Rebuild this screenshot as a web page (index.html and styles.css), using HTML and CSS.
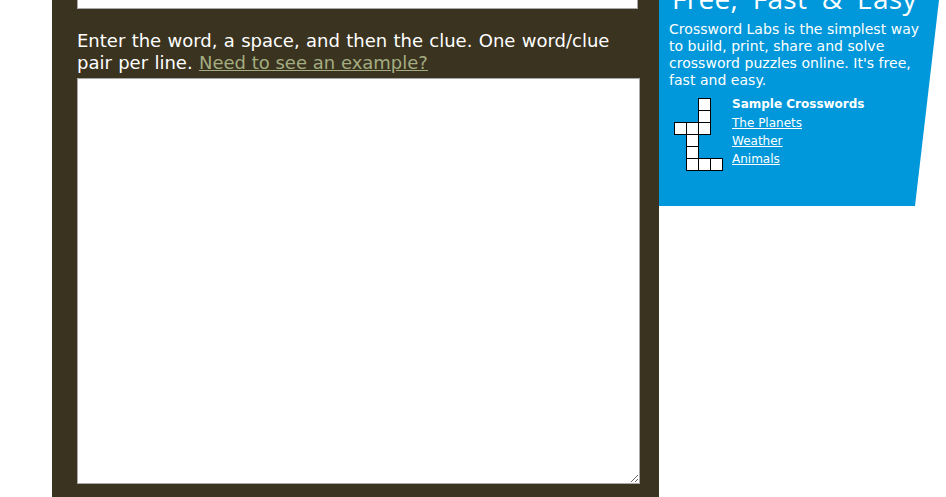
FILE: index.html
```html
<!DOCTYPE html>
<html lang="en">
<head>
    <meta charset="UTF-8">
    <meta name="viewport" content="width=device-width, initial-scale=1.0">
    <title>Crossword Labs</title>
    <link rel="stylesheet" href="styles.css">
</head>
<body>
    <div class="page">
        <div class="main">
            <input type="text" class="title-input">
            <p class="instructions">Enter the word, a space, and then the clue. One word/clue pair per line. <a href="#">Need to see an example?</a></p>
            <textarea class="words"></textarea>
        </div>

        <div class="sidebar">
            <h2>Free, Fast &amp; Easy</h2>
            <p class="about">Crossword Labs is the simplest way to build, print, share and solve crossword puzzles online. It's free, fast and easy.</p>
            <div class="samples">
                <svg class="grid-icon" width="49" height="73" viewBox="0 0 49 73">
                    <g fill="#fff" stroke="#000" stroke-width="1">
                        <rect x="24.5" y="0.5" width="12" height="12"/>
                        <rect x="24.5" y="12.5" width="12" height="12"/>
                        <rect x="0.5" y="24.5" width="12" height="12"/>
                        <rect x="12.5" y="24.5" width="12" height="12"/>
                        <rect x="24.5" y="24.5" width="12" height="12"/>
                        <rect x="12.5" y="36.5" width="12" height="12"/>
                        <rect x="12.5" y="48.5" width="12" height="12"/>
                        <rect x="12.5" y="60.5" width="12" height="12"/>
                        <rect x="24.5" y="60.5" width="12" height="12"/>
                        <rect x="36.5" y="60.5" width="12" height="12"/>
                    </g>
                </svg>
                <div class="sample-links">
                    <h3>Sample Crosswords</h3>
                    <a href="#">The Planets</a>
                    <a href="#">Weather</a>
                    <a href="#">Animals</a>
                </div>
            </div>
        </div>
    </div>
</body>
</html>
```

FILE: styles.css
```css
html, body {
    margin: 0;
    padding: 0;
    height: 100%;
    overflow: hidden;
    background: #fff;
}

body {
    font-family: "DejaVu Sans", Verdana, sans-serif;
}

.page {
    display: flex;
    align-items: flex-start;
    height: 497px;
    padding-left: 52px;
    overflow: hidden;
}

.main {
    width: 607px;
    height: 497px;
    flex-shrink: 0;
    box-sizing: border-box;
    padding: 0 19px 0 25px;
    background: #3a3320;
}

.title-input {
    display: block;
    box-sizing: border-box;
    width: 561px;
    height: 9px;
    margin: 0;
    padding: 0;
    border: 1px solid #a9a9a9;
    border-top: none;
    background: #fff;
}

.instructions {
    margin: 21px 0 4px;
    font-size: 18px;
    line-height: 22px;
    word-spacing: 0.6px;
    color: #fff;
}

.instructions a {
    color: #a3ad80;
    word-spacing: 0;
}

.words {
    display: block;
    box-sizing: border-box;
    width: 563px;
    height: 406px;
    margin: 0;
    padding: 2px;
    border: 1px solid #a9a9a9;
    background: #fff;
}

.sidebar {
    width: 280px;
    height: 206px;
    flex-shrink: 0;
    box-sizing: border-box;
    padding: 0 10px;
    background: #0098da;
    color: #fff;
    clip-path: polygon(0 0, 100% 0, 256px 100%, 0 100%);
}

.sidebar h2 {
    margin: -22px 0 0 3px;
    font-family: "Open Sans", sans-serif;
    font-size: 28px;
    line-height: 40px;
    font-weight: 400;
    letter-spacing: 0.3px;
    word-spacing: 7px;
    white-space: nowrap;
}

.about {
    margin: 3px 0 0;
    font-size: 14px;
    line-height: 17px;
    letter-spacing: 0.03px;
}

.samples {
    display: flex;
    margin-top: 9px;
    padding-left: 5px;
}

.grid-icon {
    display: block;
    flex-shrink: 0;
}

.sample-links {
    margin-top: -2px;
    margin-left: 9px;
    font-size: 12px;
    line-height: 18px;
}

.sample-links h3 {
    margin: 0 0 2px;
    font-size: 12px;
    line-height: 16px;
    font-weight: 700;
}

.sample-links a {
    display: block;
    color: #fff;
}
```
